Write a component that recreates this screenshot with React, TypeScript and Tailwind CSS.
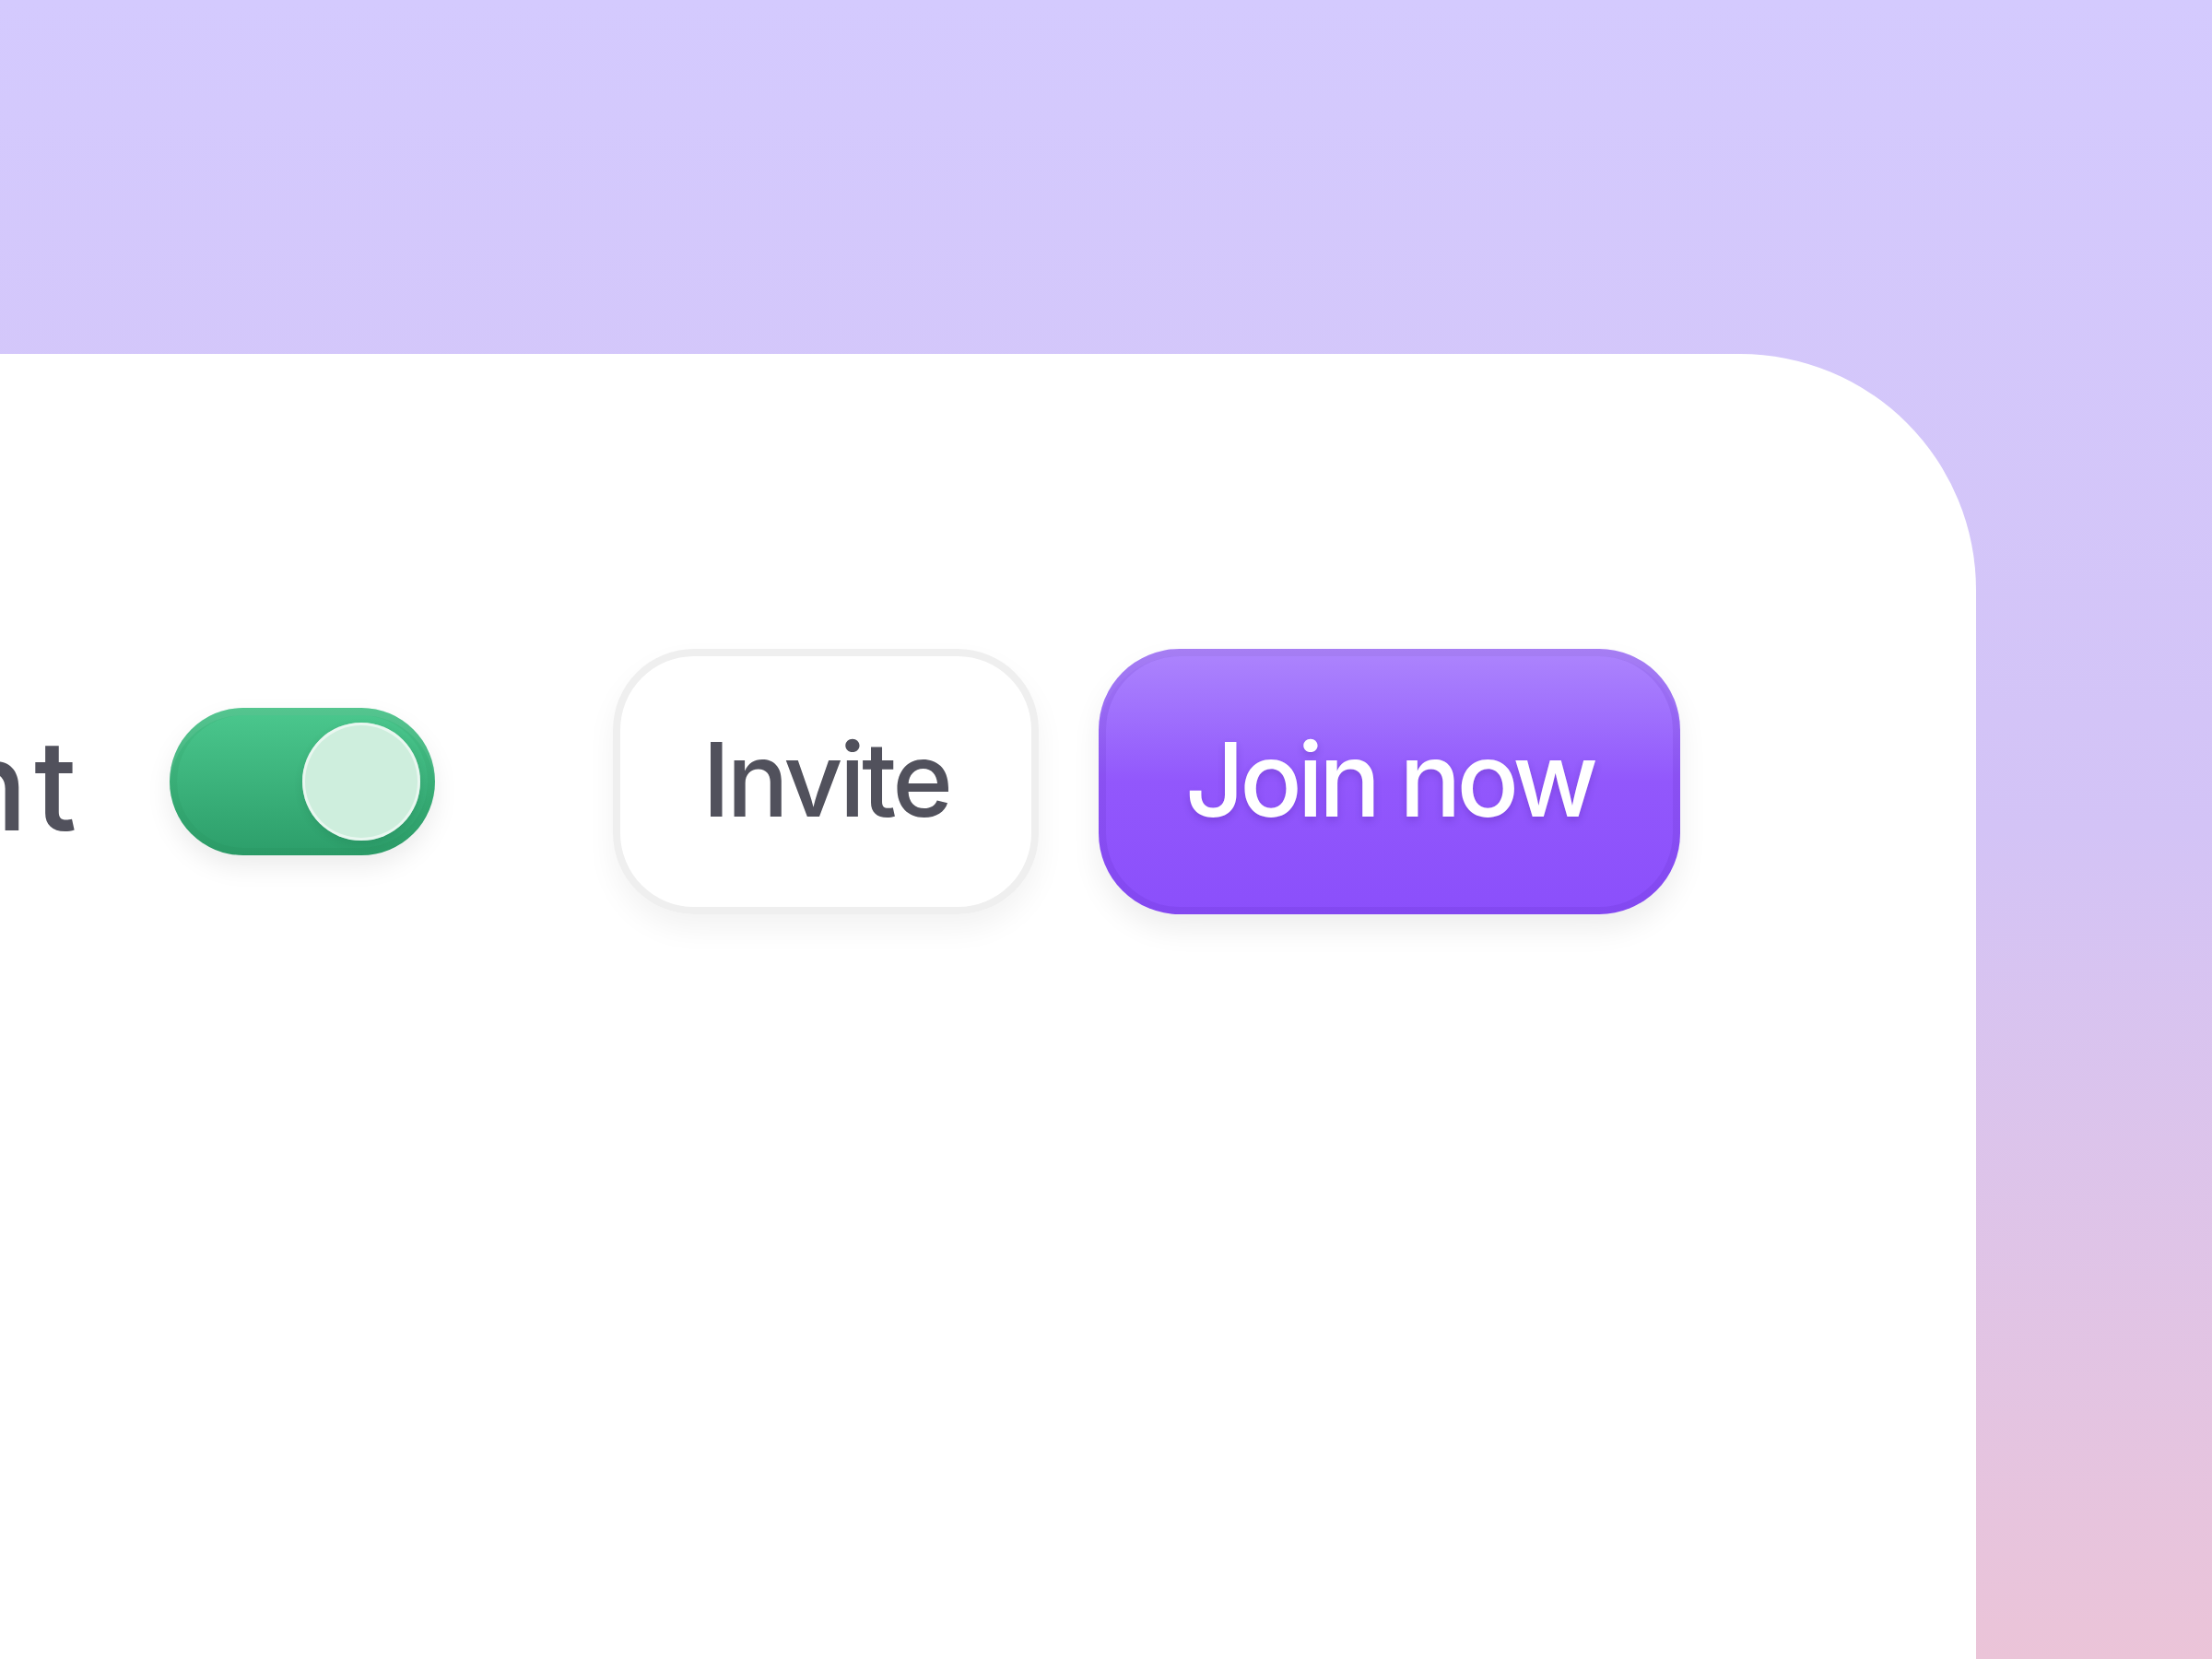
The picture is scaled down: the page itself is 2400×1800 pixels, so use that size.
import React from "react";

export default function App() {
  return (
    <div className="h-[1800px] w-full overflow-hidden bg-gradient-to-b from-[#d4cafe] via-[#d3c3f6] to-[#ebc4d8] pt-[384px] font-['Inter','Noto_Sans',sans-serif]">
      <div className="h-[1416px] w-[2144px] overflow-hidden rounded-tr-[256px] bg-white">
        <div className="flex items-center justify-end pr-[321px] pt-[320px]">
          <span className="shrink-0 whitespace-nowrap pt-[8px] text-[136px] font-medium leading-none tracking-[0.05em] text-[#51515c]">
            Present
          </span>
          <button
            type="button"
            aria-pressed="true"
            className="ml-[94px] flex h-[160px] w-[288px] shrink-0 items-center justify-end rounded-full bg-gradient-to-b from-[#4bc88e] to-[#2c9e6a] pr-[16px] shadow-[inset_0_0_0_8px_rgba(20,110,70,0.08),inset_0_8px_0_rgba(255,255,255,0.08),0_12px_28px_rgba(0,0,0,0.08)]"
          >
            <span className="block h-[128px] w-[128px] rounded-full bg-[#ceeedd] shadow-[inset_0_0_0_3px_rgba(255,255,255,0.55),0_4px_10px_rgba(0,60,30,0.12)]" />
          </button>
          <button
            type="button"
            className="ml-[193px] flex h-[288px] w-[462px] shrink-0 items-center justify-center rounded-[88px] bg-white pb-[6px] text-[112px] font-medium leading-none tracking-[-0.035em] text-[#51515c] shadow-[inset_0_0_0_8px_#efefef,0_16px_32px_rgba(0,0,0,0.05)]"
          >
            Invite
          </button>
          <button
            type="button"
            className="ml-[65px] flex h-[288px] w-[631px] shrink-0 items-center justify-center rounded-[88px] bg-gradient-to-b from-[#ad85fd] via-[#9257fc] to-[#8b4ffb] pb-[6px] text-[112px] font-medium leading-none tracking-[-0.045em] text-white shadow-[inset_0_0_0_8px_rgba(70,20,160,0.1),inset_0_8px_0_rgba(255,255,255,0.05),0_16px_32px_rgba(0,0,0,0.07)] [text-shadow:0_4px_8px_rgba(50,0,120,0.2)]"
          >
            Join now
          </button>
        </div>
      </div>
    </div>
  );
}
